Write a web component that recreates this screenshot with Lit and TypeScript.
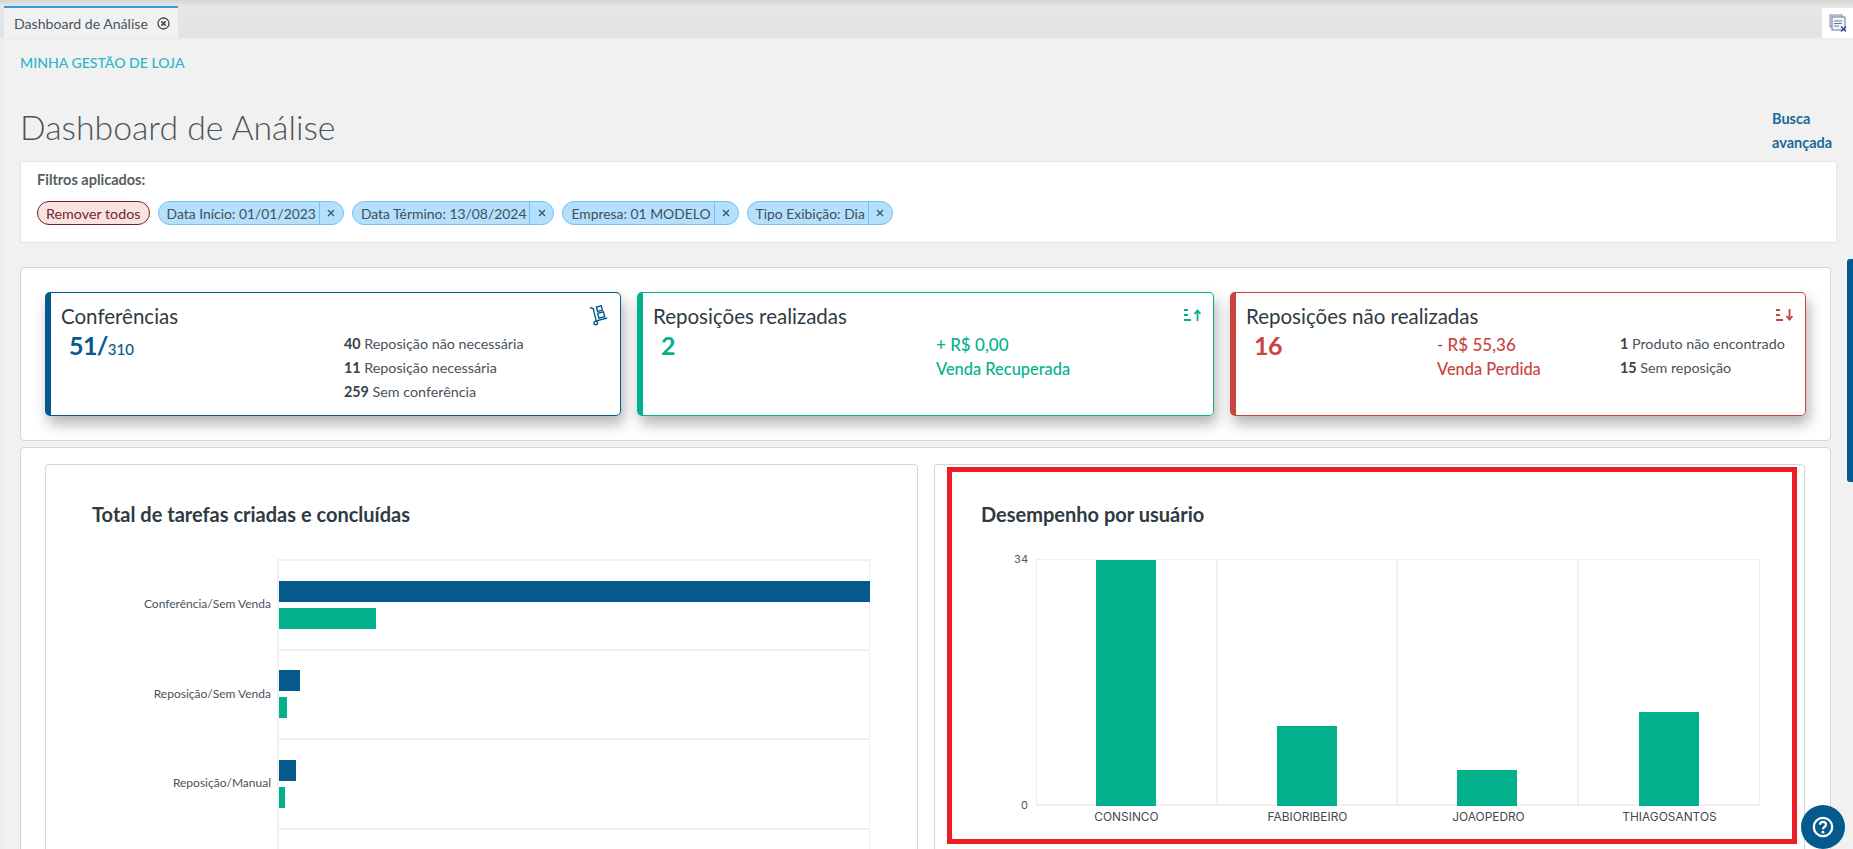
import { LitElement, html, css, svg } from "lit";
import { customElement } from "lit/decorators.js";

const BLUE = "#045a8d";
const GREEN = "#03b28d";
const RED = "#c9443f";

const tasks = [
  { label: "Conferência/Sem Venda", a: 591, b: 97 },
  { label: "Reposição/Sem Venda", a: 21, b: 8 },
  { label: "Reposição/Manual", a: 17, b: 6 },
  { label: "", a: 0, b: 0 },
];
const users = [
  { label: "CONSINCO", v: 246 },
  { label: "FABIORIBEIRO", v: 80 },
  { label: "JOAOPEDRO", v: 36 },
  { label: "THIAGOSANTOS", v: 94 },
];
const chips = ["Data Início: 01/01/2023", "Data Término: 13/08/2024", "Empresa: 01 MODELO", "Tipo Exibição: Dia"];

@customElement("app-root")
export class AppRoot extends LitElement {
  static styles = css`
    :host { display: block; height: 849px; width: 1853px; overflow: hidden; position: relative; background: #ececec;
      font-family: Lato, "Noto Sans", sans-serif; color: #444; }
    * { box-sizing: border-box; }
    .tabbar { height: 40px; background: linear-gradient(#d4d4d4 0, #e6e6e6 6px, #e3e3e3 100%); border-bottom: 2px solid #eeeeee; display: flex; align-items: flex-end; justify-content: space-between; padding-left: 4px; }
    .tab { width: 174px; height: 32px; background: #f1f1f1; border-top: 2px solid #3498db; display: flex; align-items: center; padding-left: 10px; gap: 9px; font-size: 14.1px; color: #47555f; white-space: nowrap; }
    .winbtn { width: 31px; height: 30px; background: #fff; display: flex; align-items: center; justify-content: center; }
    .content { margin-left: 4px; background: #f1f1f1; height: 809px; padding: 0 16px 0 16px; position: relative; }
    .crumb { height: 46px; padding-top: 14px; font-size: 14.1px; font-weight: 500; color: #2cb5c9; line-height: 18px; }
    .headrow { display: flex; justify-content: space-between; height: 75px; }
    h1 { margin: 18px 0 0; font-size: 33.8px; font-weight: 300; line-height: 46px; color: #4a5659; }
    .busca { font-size: 14.5px; font-weight: 700; color: #176a9b; line-height: 24px; width: 64px; margin-top: 21px; margin-right: 1px; }
    .filters { width: 1817px; height: 82px; background: #fff; border: 1px solid #e4e4e4; border-radius: 3px; padding: 9px 16px; }
    .f-title { font-size: 14.5px; font-weight: 700; color: #565e62; line-height: 18px; }
    .chips { display: flex; gap: 8px; margin-top: 12px; }
    .chip { height: 24px; border-radius: 12px; display: flex; align-items: center; font-size: 13.9px; white-space: nowrap; background: #b4e0fd; border: 1px solid #74c2f5; color: #40505a; }
    .chip .t { padding: 0 3px 0 8px; }
    .chip .x { width: 24px; height: 100%; border-left: 1px solid #74c2f5; display: flex; align-items: center; justify-content: center; }
    .chip.rm { background: #f8e3e3; border-color: #7a1f1f; color: #7a2525; padding: 0 8px; font-size: 14.3px; }
    .panel { background: #fff; border: 1px solid #d4d4d4; border-radius: 4px; width: 1811px; }
    .p1 { height: 174px; margin-top: 24px; padding: 24px; display: flex; gap: 16px; }
    .card { width: 576px; height: 124px; border: 1px solid; border-left-width: 6px; border-radius: 5px; box-shadow: 3px 8px 14px rgba(0,0,0,.3); padding: 11px 12px 0 10px; }
    .card.b { border-color: #045a8d; }
    .card.g { border-color: #03b28d; width: 577px; }
    .card.r { border-color: #c9443f; }
    .c-head { display: flex; justify-content: space-between; height: 29px; }
    .c-title { font-size: 20.5px; line-height: 24px; color: #2f3a42; }
    .cart { margin: 1px -1px 0 0; }
    .sort { margin-top: 5px; }
    .c-body { display: grid; grid-template-columns: 283px 1fr; }
    .r .c-body { grid-template-columns: 191px 183px 1fr; }
    .big { font-size: 25px; font-weight: 700; line-height: 30px; padding-left: 8px; margin-top: -3px; letter-spacing: -0.6px; }
    .big small { font-size: 15px; font-weight: 500; letter-spacing: 0; }
    .b .big { color: #045a8d; }
    .g .big, .g .val { color: #03b28d; }
    .r .big, .r .val { color: #c9443f; }
    .val { font-size: 16.4px; font-weight: 500; line-height: 24px; }
    .val div:first-child { font-size: 17px; }
    .list { font-size: 14.3px; line-height: 24px; color: #47525a; white-space: nowrap; margin-top: -1px; }
    .list b { font-weight: 700; color: #37424a; }
    .p2 { height: 420px; margin-top: 6px; padding: 16px 24px; display: flex; gap: 16px; }
    .chart { height: 400px; background: #fff; border: 1px solid #d4d4d4; border-radius: 4px; padding-top: 36px; overflow: hidden; }
    .left { width: 873px; padding-left: 46px; }
    .right { width: 871px; padding-left: 46px; }
    h2 { margin: 0; font-size: 20px; font-weight: 700; line-height: 26px; color: #2f3a42; }
    .hplot { display: grid; grid-template-columns: 185px 593px; margin-top: 32px; }
    .hlabels div { height: 89.5px; display: flex; align-items: center; justify-content: flex-end; padding: 0 6px 0 0; font-size: 12px; color: #47525a; }
    .hbars { border-left: 2px solid #f0f0f0; border-right: 1px solid #eee; border-top: 2px solid #f0f0f0; }
    .hrow { height: 89.5px; border-bottom: 2px solid #efefef; display: flex; flex-direction: column; justify-content: center; gap: 6px; }
    .hrow i { display: block; height: 21px; }
    .hrow i.a { background: #045a8d; }
    .hrow i.c { background: #03b28d; }
    .vplot { display: grid; grid-template-columns: 55px 724px; margin-top: 32px; }
    .yaxis { display: flex; flex-direction: column; justify-content: space-between; align-items: flex-end; padding-right: 8px; font-family: Inter, sans-serif; font-size: 11px; color: #555; line-height: 12px; margin: -6px 0 -5px; height: 258px; }
    .vbars { height: 247px; display: grid; grid-template-columns: repeat(4, 1fr); border: 2px solid #f0f0f0; border-left-width: 1px; border-right-width: 1px; border-top-width: 1px; }
    .vcol { display: flex; align-items: flex-end; justify-content: center; border-right: 2px solid #f0f0f0; }
    .vcol:last-child { border-right: none; }
    .vcol i { display: block; width: 60px; background: #03b28d; }
    .xlabels { grid-column: 2; display: grid; grid-template-columns: repeat(4, 1fr); margin-top: 4px; }
    .xlabels span { text-align: center; font-family: Inter, sans-serif; font-size: 11.9px; line-height: 14px; color: #4a4650; }
    .annot { position: absolute; left: 947px; top: 467px; width: 850px; height: 377px; border: 5px solid #ee1c25; pointer-events: none; }
    .scroll { position: absolute; left: 1847px; top: 259px; width: 6px; height: 223px; background: #045a8d; border-radius: 3px 0 0 3px; }
    .help { position: absolute; left: 1801px; top: 805px; width: 44px; height: 44px; border-radius: 50%; background: #045a8d; display: flex; align-items: center; justify-content: center; }
  `;

  private closeIcon() {
    return html`<svg width="13" height="13" viewBox="0 0 13 13" fill="none" stroke="#3f4a52"><circle cx="6.5" cy="6.5" r="5.5" stroke-width="1.3"/><path d="M4.4 4.4l4.2 4.2M8.6 4.4l-4.2 4.2" stroke-width="1.6"/></svg>`;
  }
  private chipX() {
    return html`<svg width="8" height="8" viewBox="0 0 8 8" stroke="#33566e" stroke-width="1.3"><path d="M1 1l6 6M7 1l-6 6"/></svg>`;
  }
  private sortIcon(color: string, up: boolean) {
    const arrow = up
      ? svg`<path d="M13.5 12V1.5M10.5 5l3-3.5 3 3.5" />`
      : svg`<path d="M13.5 0v10.5M10.5 7l3 3.5 3-3.5" />`;
    return html`<svg class="sort" width="17" height="12" viewBox="0 0 17 12" fill="none" stroke=${color} stroke-width="1.8"><path d="M0 1h4M0 6h4M0 11h7"/>${arrow}</svg>`;
  }
  private cartIcon() {
    return html`<svg class="cart" width="20" height="21" viewBox="0 0 20 21" fill="none" stroke=${BLUE} stroke-width="1.4"><path d="M1 2.5l3.2 1 3 12.5 11-3"/><circle cx="6.8" cy="18" r="1.8"/><rect x="8" y="1.5" width="5" height="4.5" transform="rotate(-14 10 4)"/><rect x="9.2" y="7.5" width="6" height="5" transform="rotate(-14 12 10)"/></svg>`;
  }

  render() {
    return html`
      <div class="tabbar">
        <div class="tab">Dashboard de Análise ${this.closeIcon()}</div>
        <div class="winbtn">
          <svg width="18" height="18" viewBox="0 0 18 18" fill="none">
            <rect x="1" y="1" width="12" height="12" fill="#dfe3f2" stroke="#8a86b8"/>
            <rect x="3" y="3" width="13" height="13" fill="#f4f6fb" stroke="#5f7f9f"/>
            <path d="M5 7h8M5 9.5h8M5 12h5" stroke="#6a7a8a"/>
            <path d="M12 12.5l5 5M17 12.5l-5 5" stroke="#33478a" stroke-width="1.3"/>
          </svg>
        </div>
      </div>
      <div class="content">
        <div class="crumb">MINHA GESTÃO DE LOJA</div>
        <div class="headrow">
          <h1>Dashboard de Análise</h1>
          <div class="busca">Busca avançada</div>
        </div>
        <div class="filters">
          <div class="f-title">Filtros aplicados:</div>
          <div class="chips">
            <div class="chip rm">Remover todos</div>
            ${chips.map((c) => html`<div class="chip"><span class="t">${c}</span><span class="x">${this.chipX()}</span></div>`)}
          </div>
        </div>
        <div class="panel p1">
          <div class="card b">
            <div class="c-head"><span class="c-title">Conferências</span>${this.cartIcon()}</div>
            <div class="c-body">
              <div class="big">51/<small>310</small></div>
              <div class="list"><div><b>40</b> Reposição não necessária</div><div><b>11</b> Reposição necessária</div><div><b>259</b> Sem conferência</div></div>
            </div>
          </div>
          <div class="card g">
            <div class="c-head"><span class="c-title">Reposições realizadas</span>${this.sortIcon(GREEN, true)}</div>
            <div class="c-body">
              <div class="big">2</div>
              <div class="val"><div>+ R$ 0,00</div><div>Venda Recuperada</div></div>
            </div>
          </div>
          <div class="card r">
            <div class="c-head"><span class="c-title">Reposições não realizadas</span>${this.sortIcon(RED, false)}</div>
            <div class="c-body">
              <div class="big">16</div>
              <div class="val"><div>- R$ 55,36</div><div>Venda Perdida</div></div>
              <div class="list"><div><b>1</b> Produto não encontrado</div><div><b>15</b> Sem reposição</div></div>
            </div>
          </div>
        </div>
        <div class="panel p2">
          <div class="chart left">
            <h2>Total de tarefas criadas e concluídas</h2>
            <div class="hplot">
              <div class="hlabels">${tasks.map((t) => html`<div>${t.label}</div>`)}</div>
              <div class="hbars">
                ${tasks.map((t) => html`<div class="hrow"><i class="a" style="width:${t.a}px"></i><i class="c" style="width:${t.b}px"></i></div>`)}
              </div>
            </div>
          </div>
          <div class="chart right">
            <h2>Desempenho por usuário</h2>
            <div class="vplot">
              <div class="yaxis"><span>34</span><span>0</span></div>
              <div class="vbars">${users.map((u) => html`<div class="vcol"><i style="height:${u.v}px"></i></div>`)}</div>
              <div class="xlabels">${users.map((u) => html`<span>${u.label}</span>`)}</div>
            </div>
          </div>
        </div>
      </div>
      <div class="annot"></div>
      <div class="scroll"></div>
      <div class="help">
        <svg width="24" height="24" viewBox="0 0 24 24" fill="none" stroke="#fff"><circle cx="12" cy="12" r="9.2" stroke-width="2.3"/><path d="M9 9.7c0-1.7 1.3-2.9 3-2.9s3 1.1 3 2.8c0 2.3-3 2.4-3 4.6" stroke-width="2.2"/><circle cx="12" cy="17.2" r="1.4" fill="#fff" stroke="none"/></svg>
      </div>
    `;
  }
}
